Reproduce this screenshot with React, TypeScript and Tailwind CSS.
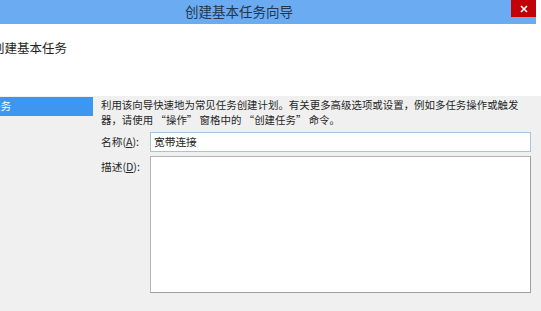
export default function App() {
  const font = "font-['Noto_Sans_CJK_SC','Microsoft_YaHei',sans-serif]";
  return (
    <div className={`w-[541px] h-[311px] overflow-hidden flex flex-col bg-[#f0f0f0] ${font}`}>
      {/* title bar */}
      <div className="flex h-[24px] bg-white">
        <div className="w-[536px] bg-[#6aabf1] flex items-start">
          <div className="flex-1 h-full flex items-center pl-[185px]">
            <span className="text-[13.5px] leading-none text-[#22374f] whitespace-nowrap">创建基本任务向导</span>
          </div>
          <div className="w-[25px] h-[17px] bg-red-700 flex items-center justify-center">
            <svg width="8" height="8" viewBox="0 0 8 8">
              <path d="M1 1L7 7M7 1L1 7" stroke="#ffffff" strokeWidth="1.6" />
            </svg>
          </div>
        </div>
        <div className="flex-1 bg-white" />
      </div>

      {/* header */}
      <div className="h-[72px] bg-white flex items-start pt-[16px]">
        <span className="-ml-[8px] text-[12.5px] leading-[16px] text-[#1e1e1e] whitespace-nowrap">创建基本任务</span>
      </div>

      {/* body */}
      <div className="flex flex-1">
        <div className="w-[101px] shrink-0 pt-[1px]">
          <div className="w-[93px] h-[19px] bg-[#3d96ef] flex items-center overflow-hidden">
            <span className="-ml-[53px] text-[10.7px] leading-none text-white whitespace-nowrap">创建基本任务</span>
          </div>
        </div>
        <div className="flex flex-col w-[430px] text-[10.7px] text-[#262626]">
          <div className="leading-[15px] pt-[1px] whitespace-nowrap text-[10.45px]">
            <div>利用该向导快速地为常见任务创建计划。有关更多高级选项或设置，例如多任务操作或触发</div>
            <div>器，请使用 “操作” 窗格中的 “创建任务” 命令。</div>
          </div>
          <div className="flex items-center mt-[5px]">
            <span className="w-[49px] shrink-0 leading-none">名称(<span className="underline">A</span>):</span>
            <div className="w-[381px] h-[20px] bg-white border border-[#a9c1da] flex items-center pl-[3px]">
              <span className="leading-none">宽带连接</span>
            </div>
          </div>
          <div className="flex items-start mt-[4px]">
            <span className="w-[49px] shrink-0 leading-none pt-[6px]">描述(<span className="underline">D</span>):</span>
            <div className="w-[381px] h-[137px] bg-white border border-[#b4b4b4] border-r-[#a0a0a0] border-b-[#a0a0a0]" />
          </div>
        </div>
      </div>
    </div>
  );
}
